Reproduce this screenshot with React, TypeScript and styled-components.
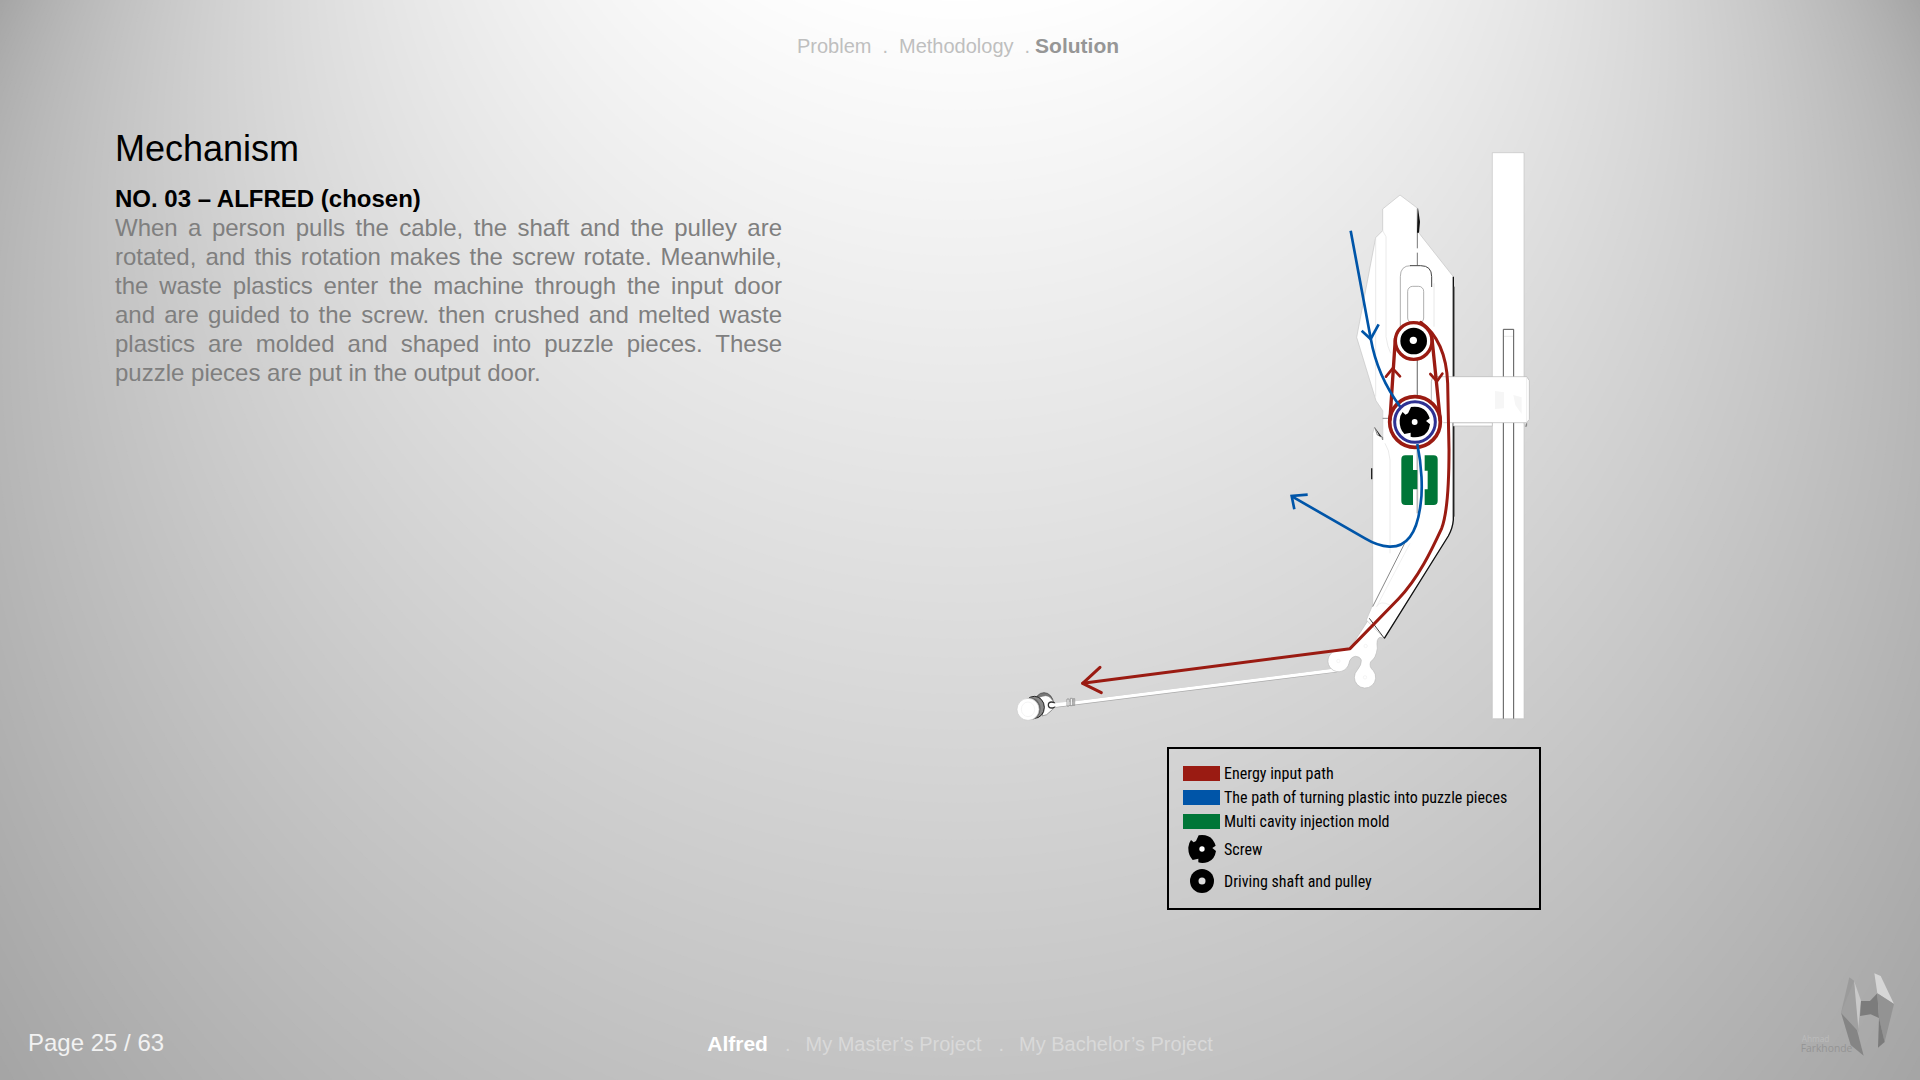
import React from 'react';
import styled, { createGlobalStyle } from 'styled-components';

/* Spotlight from above the slide: a cone of circles that grow and move down, white to grey. */
const STEPS = 90;
const spotlight = Array.from({ length: STEPS + 1 }, (_, i) => {
  const k = 1 - i / STEPS;
  const level = Math.round(255 - 90 * k);
  const cy = Math.round(-379 + 919 * k);
  const r = Math.round(380 + 722 * k);
  return `<circle cx="960" cy="${cy}" r="${r}" fill="rgb(${level},${level},${level})"/>`;
}).join('');

const backdrop = encodeURIComponent(
  `<svg xmlns="http://www.w3.org/2000/svg" viewBox="0 0 1920 1080" preserveAspectRatio="none">${spotlight}</svg>`
).replace(/\(/g, '%28').replace(/\)/g, '%29');

const colors = {
  energy: '#9a1b12',
  plastic: '#0055a8',
  mold: '#007638',
  screwRing: '#2e3192',
};

const GlobalStyle = createGlobalStyle`
  * { box-sizing: border-box; }
  body {
    margin: 0;
    font-family: "Liberation Sans", Arial, sans-serif;
    color: #000;
  }
`;

const Slide = styled.div`
  min-height: 100vh;
  display: flex;
  flex-direction: column;
  background: #a5a5a5 url("data:image/svg+xml,${backdrop}") 0 0 / 100% 100% no-repeat;
`;

const Header = styled.header`
  display: flex;
  justify-content: center;
  padding: 34px 4px 0 0;
`;

const Trail = styled.nav<{ $tone: string }>`
  display: flex;
  font-size: 20px;
  line-height: 24px;
  color: ${(p) => p.$tone};
`;

const TrailLink = styled.a<{ $current?: string }>`
  color: ${(p) => p.$current ?? 'inherit'};
  font-size: ${(p) => (p.$current ? 21 : 20)}px;
  font-weight: ${(p) => (p.$current ? 700 : 400)};
  text-decoration: none;
`;

const Dot = styled.span<{ $before: number; $after: number }>`
  margin: 0 ${(p) => p.$after}px 0 ${(p) => p.$before}px;
`;

const Main = styled.main`
  flex: 1;
  display: grid;
  grid-template-columns: minmax(0, 667fr) minmax(0, 531fr);
  column-gap: 228px;
  align-items: start;
  padding: 71px 379px 0 115px;
`;

const Article = styled.article`
  min-width: 0;
`;

const Title = styled.h1`
  margin: 0;
  font-size: 36px;
  line-height: 40px;
  font-weight: 400;
`;

const Subtitle = styled.h2`
  margin: 15px 0 0;
  font-size: 24px;
  line-height: 29px;
  font-weight: 700;
`;

const Copy = styled.p`
  margin: 0;
  font-size: 24px;
  line-height: 29px;
  text-align: justify;
  color: #7f7f7f;
`;

const Figure = styled.figure`
  margin: 0;
  padding-top: 21px;
  display: flex;
  flex-direction: column;
  align-items: flex-end;
  gap: 25px;
`;

const Drawing = styled.svg`
  display: block;
  width: 100%;
  height: auto;
`;

const Legend = styled.ul`
  list-style: none;
  margin: 0;
  width: 374px;
  padding: 12px 14px 11px;
  border: 2px solid #000;
`;

const LegendRow = styled.li<{ $tall?: boolean }>`
  display: flex;
  align-items: center;
  gap: 4px;
  height: ${(p) => (p.$tall ? 32 : 24)}px;
  font-family: "Roboto Condensed", "Liberation Sans", sans-serif;
  font-size: 16px;
  white-space: nowrap;
`;

const Mark = styled.span`
  display: flex;
  justify-content: center;
  width: 37px;
`;

const Swatch = styled.span<{ $color: string }>`
  width: 37px;
  height: 15px;
  background: ${(p) => p.$color};
`;

const Footer = styled.footer`
  display: grid;
  grid-template-columns: 1fr auto 1fr;
  align-items: end;
  padding: 0 20px 20px;
`;

const PageNumber = styled.p`
  margin: 0;
  padding-left: 8px;
  font-size: 24px;
  line-height: 34px;
  color: #f2f2f2;
`;

const FooterTrail = styled(Trail)`
  padding-bottom: 4px;
`;

const Logo = styled.svg`
  justify-self: end;
  display: block;
  width: 104px;
  height: 90px;
  font-family: "Open Sans", "Noto Sans", sans-serif;
`;

const Screw = () => (
  <>
    <path d="M-10 -41Q18 -45 32 -28Q39 -18 41 -10L31 -3L42 6Q38 32 18 39Q2 44 -11 40L-11 29L-28 33Q-42 18 -41 -5Q-40 -18 -33 -27L-25 -20L-18 -24Z" />
    <circle r="8" fill="#fff" />
  </>
);

const Machine = () => (
  <Drawing viewBox="-960 30 1593 1716" fill="none" role="img" aria-label="Section of the Alfred mechanism">
    {/* wall rail */}
    <path d="M487 38H582V1736H487Z" fill="#fff" stroke="#c4c4c4" strokeWidth="2" />
    <path d="M520 1736V568H551V1736" stroke="#555" strokeWidth="3" />
    <path d="M522 589H549" stroke="#ddd" strokeWidth="2" />

    {/* pull rod and handle */}
    <path d="M-825 1697L20 1591" stroke="#aaa" strokeWidth="12" />
    <path d="M-825 1696L20 1590" stroke="#fff" strokeWidth="10" />
    <g transform="translate(-990 1440)">
      <ellipse cx="132" cy="250" rx="28" ry="32" fill="#777" stroke="#333" strokeWidth="2" />
      <path d="M118 232Q140 222 150 232L162 246L158 268L140 284L126 288Q140 260 118 232Z" fill="#fff" stroke="#777" strokeWidth="2" />
      <ellipse cx="103" cy="262" rx="30" ry="33" fill="#8a8a8a" stroke="#222" strokeWidth="3" />
      <ellipse cx="93" cy="266" rx="29" ry="33" fill="#666" />
      <ellipse cx="84" cy="268" rx="33" ry="33" fill="#fff" stroke="#ccc" strokeWidth="2" />
      <ellipse cx="84" cy="268" rx="20" ry="22" stroke="#eee" strokeWidth="2" />
      <ellipse cx="155" cy="255" rx="10" ry="9" fill="#fff" stroke="#333" strokeWidth="4" />
      <path d="M152 256L205 250" stroke="#fff" strokeWidth="10" />
      <path d="M201 237H207V258H201ZM211 235H217V257H211ZM220 236H224V256H220Z" fill="#fff" stroke="#777" strokeWidth="2" />
    </g>

    {/* hook */}
    <path
      d="M118 1435L163 1495L150 1492Q138 1495 142 1525Q138 1555 122 1565Q116 1580 130 1592A32 32 0 1 1 82 1590Q95 1575 94 1560Q90 1549 76 1549Q60 1552 57 1570A32 32 0 1 1 15 1533L60 1525Z"
      fill="#fff"
      stroke="#bbb"
      strokeWidth="2"
    />
    <g stroke="#eee" strokeWidth="2">
      <circle cx="25" cy="1563" r="5" />
      <circle cx="105" cy="1612" r="5" />
      <circle cx="107" cy="1518" r="5" />
    </g>

    {/* housing */}
    <path
      d="M210 165L263 205L266 278L370 410V1140Q368 1165 355 1188L163 1495L109 1440L128 1395V880L133 862L158 900V812L138 782L80 592L137 293L158 272V207Z"
      fill="#fff"
      stroke="#c4c4c4"
      strokeWidth="2"
    />
    <path d="M137 293V770M158 272L168 290V590Q172 620 182 640M158 812V900M165 910Q178 930 180 960V1240" stroke="#e0e0e0" strokeWidth="2" />
    <path d="M158 835H180M134 862L142 885L158 892V900" stroke="#555" strokeWidth="2" />
    <path d="M134 862L155 890L148 888Z" fill="#222" />
    <path d="M125 985V1018" stroke="#222" strokeWidth="4" />
    <path d="M262 205V325M262 338V376" stroke="#777" strokeWidth="3" />
    <path d="M264 205L270 245L267 278H261Z" fill="#111" />
    <path d="M262 655V770" stroke="#888" strokeWidth="4" />
    <path d="M262 925V1120" stroke="#bbb" strokeWidth="5" />
    <path d="M211 560V410Q211 377 242 377" stroke="#888" strokeWidth="2" />
    <path d="M240 377H272Q305 377 305 410V441" stroke="#444" strokeWidth="3" />
    <path d="M312 430V560" stroke="#ddd" strokeWidth="2" />
    <rect x="233" y="439" width="48" height="110" rx="15" stroke="#888" strokeWidth="2" />
    <path d="M225 1208L128 1400" stroke="#888" strokeWidth="3" />
    <path d="M240 1210L140 1400Q150 1380 180 1395" stroke="#e8e8e8" strokeWidth="2" />
    <path d="M118 1435L163 1495" stroke="#444" strokeWidth="3" />
    <path d="M370 410V1140Q368 1165 355 1188L163 1495" stroke="#111" strokeWidth="4" />
    <path d="M372 440V710M372 850V1130" stroke="#333" strokeWidth="3" />

    {/* wall bracket */}
    <path d="M370 848H487V858H370ZM582 848H592V856L586 860Z" fill="#fff" stroke="#bbb" strokeWidth="2" />
    <path d="M589 850L588 860" stroke="#555" strokeWidth="3" />
    <path d="M340 710H590L598 722V838L590 848H340Z" fill="#fff" />
    <path d="M340 710H590L598 722V838L590 848H340" stroke="#b5b5b5" strokeWidth="2" />
    <path d="M340 710H315Q304 712 304 725V800" stroke="#999" strokeWidth="2" />
    <path d="M590 712V846" stroke="#e4e4e4" strokeWidth="2" />
    <path d="M495 753L522 757V805L495 807ZM550 765L575 772V822L556 795Z" fill="#f6f6f6" />

    {/* mold */}
    <path d="M226 946H249V990H262V1048H249V1095H226Q214 1095 214 1083V958Q214 946 226 946Z" fill={colors.mold} />
    <path d="M284 946H311Q323 946 323 958V1083Q323 1095 311 1095H284V1048H293V992H284Z" fill={colors.mold} />

    {/* energy path */}
    <g stroke={colors.energy} strokeWidth="9" strokeLinecap="round" strokeLinejoin="round">
      <path d="M272 547C325 585 350 650 353 730L357 930C357 1010 352 1120 335 1165C305 1230 265 1315 205 1377L60 1526L-742 1630" />
      <path d="M-690 1582L-742 1630L-686 1658" />
      <circle cx="251" cy="603" r="55" strokeWidth="10" fill="#fff" />
      <circle cx="255" cy="846" r="76" strokeWidth="11" fill="#fff" />
      <path d="M196 596L180 838M306 596L331 842" strokeWidth="10" />
      <path d="M168 710L188 685L210 709M301 702L321 724L337 701" strokeWidth="8" />
    </g>

    {/* plastic path */}
    <g stroke={colors.plastic} strokeWidth="8">
      <path d="M62 272L122 595C135 670 165 740 212 802" />
      <path d="M95 572L122 597L146 553" />
      <path d="M262 912C276 980 278 1050 272 1090C262 1180 230 1222 178 1220C150 1218 130 1210 105 1195L-113 1070" />
      <path d="M-67 1064L-115 1068L-107 1108" />
    </g>

    <circle cx="255" cy="846" r="61" fill="#fff" stroke={colors.screwRing} strokeWidth="9" />
    <g transform="translate(254 846) scale(1.1)" fill="#000">
      <Screw />
    </g>
    <circle cx="251" cy="603" r="40" fill="#000" />
    <circle cx="250" cy="601" r="11" fill="#fff" />
  </Drawing>
);

const ScrewIcon = () => (
  <svg width="28" height="28" viewBox="-42 -42 84 84" aria-hidden="true">
    <Screw />
  </svg>
);

const PulleyIcon = () => (
  <svg width="24" height="24" viewBox="-12 -12 24 24" aria-hidden="true">
    <circle r="12" />
    <circle r="3.5" fill="#ddd" />
  </svg>
);

const LogoMark = () => (
  <Logo viewBox="48 60 312 270" role="img" aria-label="Ahmad Farkhonde">
    <text x="65" y="276" fontSize="25" fill="#bcbcbc">Ahmad</text>
    <text x="62" y="305" fontSize="31" fill="#949494">Farkhonde</text>
    <path d="M208 82L222 92L236 200L222 240L183 188Z" fill="#9b9b9b" />
    <path d="M222 92L243 152L238 200L234 238L226 200Z" fill="#c9c9c9" />
    <path d="M183 188L230 236L251 317L212 285Z" fill="#858585" />
    <path d="M222 92L183 188L236 246Z" fill="#a0a0a0" />
    <path d="M243 153H270L292 130L297 204L272 193L240 198Z" fill="#7c7c7c" />
    <path d="M283 70L302 78L342 162L292 130Z" fill="#d6d6d6" />
    <path d="M292 130L342 162L314 276L297 204Z" fill="#939393" />
    <path d="M297 204L314 276L294 293Z" fill="#7b7b7b" />
  </Logo>
);

export default function App() {
  return (
    <>
      <GlobalStyle />
      <Slide>
        <Header>
          <Trail $tone="#bfbfbf" aria-label="Sections">
            <TrailLink href="#problem">Problem</TrailLink>
            <Dot $before={11} $after={11}>.</Dot>
            <TrailLink href="#methodology">Methodology</TrailLink>
            <Dot $before={11} $after={5}>.</Dot>
            <TrailLink href="#solution" $current="#969696">Solution</TrailLink>
          </Trail>
        </Header>
        <Main>
          <Article>
            <Title>Mechanism</Title>
            <Subtitle>NO. 03 – ALFRED (chosen)</Subtitle>
            <Copy>
              When a person pulls the cable, the shaft and the pulley are rotated, and this rotation makes the screw
              rotate. Meanwhile, the waste plastics enter the machine through the input door and are guided to the
              screw. then crushed and melted waste plastics are molded and shaped into puzzle pieces. These puzzle
              pieces are put in the output door.
            </Copy>
          </Article>
          <Figure>
            <Machine />
            <Legend>
              <LegendRow>
                <Mark><Swatch $color={colors.energy} /></Mark>
                Energy input path
              </LegendRow>
              <LegendRow>
                <Mark><Swatch $color={colors.plastic} /></Mark>
                The path of turning plastic into puzzle pieces
              </LegendRow>
              <LegendRow>
                <Mark><Swatch $color={colors.mold} /></Mark>
                Multi cavity injection mold
              </LegendRow>
              <LegendRow $tall>
                <Mark><ScrewIcon /></Mark>
                Screw
              </LegendRow>
              <LegendRow $tall>
                <Mark><PulleyIcon /></Mark>
                Driving shaft and pulley
              </LegendRow>
            </Legend>
          </Figure>
        </Main>
        <Footer>
          <PageNumber>Page 25 / 63</PageNumber>
          <FooterTrail $tone="#d9d9d9" aria-label="Projects">
            <TrailLink href="#alfred" $current="#ffffff">Alfred</TrailLink>
            <Dot $before={17} $after={15}>.</Dot>
            <TrailLink href="#masters">My Master’s Project</TrailLink>
            <Dot $before={17} $after={15}>.</Dot>
            <TrailLink href="#bachelors">My Bachelor’s Project</TrailLink>
          </FooterTrail>
          <LogoMark />
        </Footer>
      </Slide>
    </>
  );
}
